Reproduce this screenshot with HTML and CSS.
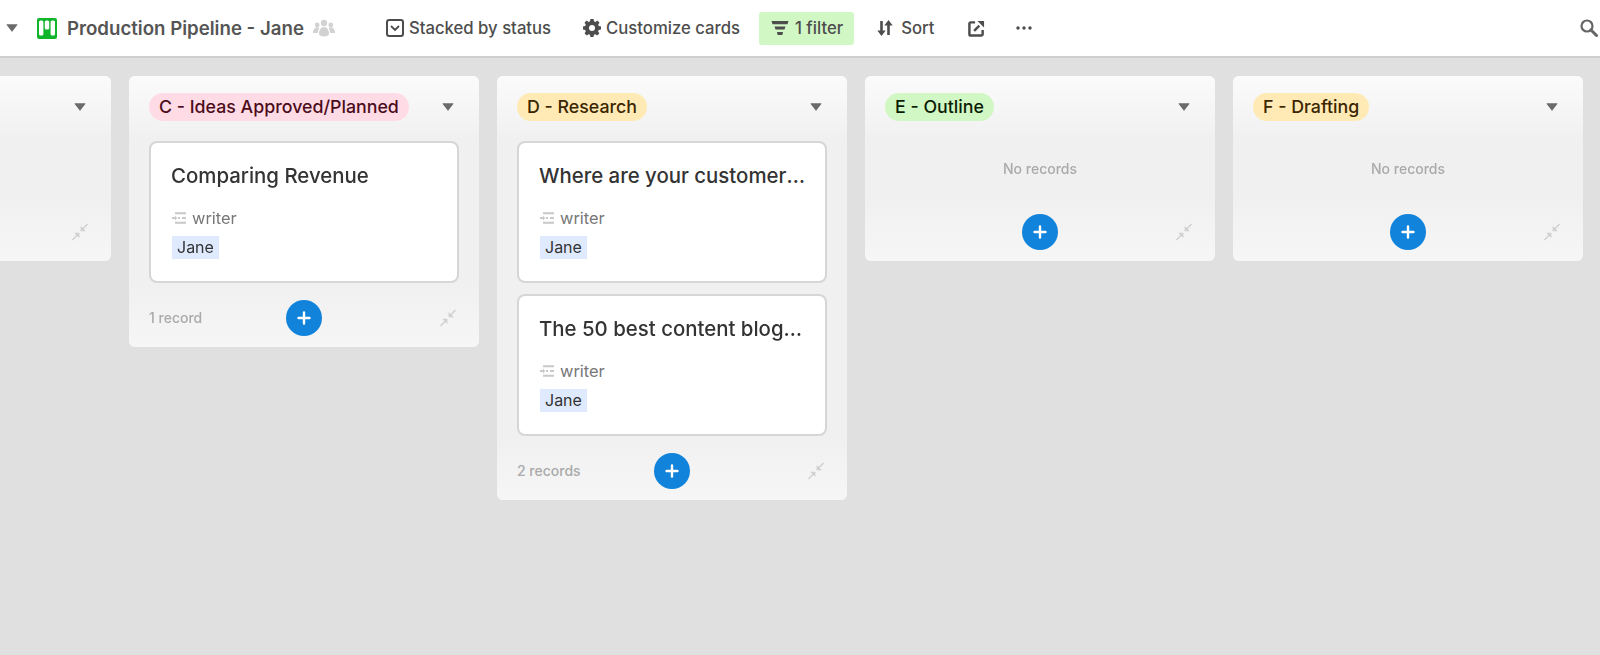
FILE: index.html
```html
<!DOCTYPE html>
<html lang="en">
<head>
<meta charset="utf-8">
<title>Production Pipeline - Jane</title>
<link rel="stylesheet" href="styles.css">
</head>
<body>
<svg class="defs" width="0" height="0" aria-hidden="true">
  <symbol id="caret" viewBox="0 0 12 10"><path d="M1 1.200h10a.4.4 0 0 1 .3.7L6.300 8.600a.4.4 0 0 1-.6 0L.7 1.900a.4.4 0 0 1 .3-.7z"/></symbol>
  <symbol id="plus" viewBox="0 0 14 14"><path d="M7 1.500v11M1.500 7h11" stroke="#fff" stroke-width="2.400" stroke-linecap="round" fill="none"/></symbol>
  <symbol id="collapse" viewBox="0 0 18 18"><path d="M17 1.500 12.600 6l2.200 2.200H9.600V3l2 2L16 .6zM1 16.500 5.400 12 3.200 9.800h5.200V15l-2-2L2 17.400z"/></symbol>
  <symbol id="field" viewBox="0 0 14 14"><path d="M3 1.200h11v2H3zM6 6h2v2H6zM10 6h4v2h-4zM3 10.800h11v2H3zM0 6h3V4.600L5.200 7 3 9.400V8H0z"/></symbol>
</svg>

<header class="toolbar">
  <svg class="tb-caret" viewBox="0 0 12 10"><use href="#caret"/></svg>
  <svg class="logo" viewBox="0 0 20 21"><rect width="20" height="21" rx="2" fill="#11b52b"/><rect x="2" y="2.500" width="4.400" height="15" rx="1.600" fill="#fff"/><rect x="7.800" y="2.500" width="4.400" height="9" rx="1.600" fill="#fff"/><rect x="13.600" y="2.500" width="4.400" height="15" rx="1.600" fill="#fff"/></svg>
  <h1 class="view-name">Production Pipeline - Jane</h1>
  <svg class="people" viewBox="0 0 22 18"><circle cx="4.200" cy="6" r="2.400"/><circle cx="17.800" cy="6" r="2.400"/><circle cx="11" cy="4" r="3.200"/><path d="M0 14c0-3.400 1.800-5.800 4.200-5.800 1 0 1.600.3 2.200.8C5.400 10.500 5 12.200 5 14zM22 14c0-3.400-1.800-5.800-4.200-5.800-1 0-1.600.3-2.200.8 1 1.500 1.400 3.200 1.400 5zM6 15c0-4.200 2-7 5-7s5 2.800 5 7c0 1.500-2.200 2.500-5 2.500S6 16.500 6 15z"/></svg>

  <div class="tool tool-stack">
    <svg class="ico" viewBox="0 0 18 18"><rect x="1" y="1" width="16" height="16" rx="2.200" fill="none" stroke="#4d4d4d" stroke-width="2"/><path d="M5.500 7.500 9 11l3.500-3.500" fill="none" stroke="#4d4d4d" stroke-width="1.800" stroke-linecap="round"/></svg>
    <span>Stacked by status</span>
  </div>
  <div class="tool tool-cust">
    <svg class="ico" viewBox="0 0 18 18"><path fill-rule="evenodd" d="M7.400 0h3.200l.4 2.300 1.400.6 1.900-1.300 2.200 2.200-1.300 1.900.6 1.400L18 7.500v3.100l-2.300.4-.6 1.400 1.300 1.900-2.200 2.200-1.900-1.300-1.400.6-.4 2.200H7.400L7 15.800l-1.400-.6-1.900 1.300-2.200-2.200 1.300-1.900-.6-1.400L0 10.600V7.500l2.200-.4.6-1.400-1.300-1.900 2.200-2.200 1.900 1.300L7 2.300zM9 6a3 3 0 1 0 0 6 3 3 0 0 0 0-6z" fill="#4d4d4d"/></svg>
    <span>Customize cards</span>
  </div>
  <div class="tool tool-filter">
    <svg class="ico" viewBox="0 0 18 16"><path d="M.5 1h17l-1 3.200H1.500zM3.500 6.500h11l-1 3H4.500zM6 12h6l-.6 3H6.600z" fill="#4d4d4d"/></svg>
    <span>1 filter</span>
  </div>
  <div class="tool tool-sort">
    <svg class="ico" viewBox="0 0 18 18"><path d="M4.200 2h2.600v9.500h2.900L5.500 17 1.300 11.500h2.900zM11.200 16V6.500H8.300L12.500 1l4.200 5.500h-2.900V16z" fill="#4d4d4d"/></svg>
    <span>Sort</span>
  </div>
  <svg class="tool-share" viewBox="0 0 18 18"><path d="M7.500 2.500H3A1.500 1.500 0 0 0 1.500 4v11A1.500 1.500 0 0 0 3 16.500h11a1.500 1.500 0 0 0 1.500-1.500v-4.500" fill="none" stroke="#4d4d4d" stroke-width="2.600"/><path d="M6.500 11.500 12 6" stroke="#4d4d4d" stroke-width="2.600" fill="none"/><path d="M10 1h7v7z" fill="#4d4d4d"/></svg>
  <svg class="tool-more" viewBox="0 0 16 4"><circle cx="2" cy="2" r="1.700"/><circle cx="8" cy="2" r="1.700"/><circle cx="14" cy="2" r="1.700"/></svg>
  <svg class="search" viewBox="0 0 18 18"><circle cx="7" cy="7" r="5.500" fill="none" stroke="#666" stroke-width="2.200"/><path d="M11 11l5.500 5.500" stroke="#666" stroke-width="3" stroke-linecap="round"/></svg>
</header>

<main class="board">
  <section class="stack">
    <div class="stack-head"><span></span><svg class="head-caret"><use href="#caret"/></svg></div>
    <div class="stack-empty"></div>
    <div class="stack-foot"><span class="count"></span><span class="foot-end"><svg class="collapse"><use href="#collapse"/></svg></span></div>
  </section>

  <section class="stack">
    <div class="stack-head"><span class="pill pill-pink">C - Ideas Approved/Planned</span><svg class="head-caret"><use href="#caret"/></svg></div>
    <div class="cards">
      <article class="card">
        <h2 class="card-title">Comparing Revenue</h2>
        <div class="field"><svg class="field-ico"><use href="#field"/></svg>writer</div>
        <span class="tag">Jane</span>
      </article>
    </div>
    <div class="stack-foot"><span class="count">1 record</span><button class="add"><svg><use href="#plus"/></svg></button><span class="foot-end"><svg class="collapse"><use href="#collapse"/></svg></span></div>
  </section>

  <section class="stack">
    <div class="stack-head"><span class="pill pill-amber">D - Research</span><svg class="head-caret"><use href="#caret"/></svg></div>
    <div class="cards">
      <article class="card">
        <h2 class="card-title">Where are your customers coming from?</h2>
        <div class="field"><svg class="field-ico"><use href="#field"/></svg>writer</div>
        <span class="tag">Jane</span>
      </article>
      <article class="card">
        <h2 class="card-title">The 50 best content blogs to follow</h2>
        <div class="field"><svg class="field-ico"><use href="#field"/></svg>writer</div>
        <span class="tag">Jane</span>
      </article>
    </div>
    <div class="stack-foot"><span class="count">2 records</span><button class="add"><svg><use href="#plus"/></svg></button><span class="foot-end"><svg class="collapse"><use href="#collapse"/></svg></span></div>
  </section>

  <section class="stack">
    <div class="stack-head"><span class="pill pill-green">E - Outline</span><svg class="head-caret"><use href="#caret"/></svg></div>
    <div class="stack-empty">No records</div>
    <div class="stack-foot"><span class="count"></span><button class="add"><svg><use href="#plus"/></svg></button><span class="foot-end"><svg class="collapse"><use href="#collapse"/></svg></span></div>
  </section>

  <section class="stack">
    <div class="stack-head"><span class="pill pill-amber">F - Drafting</span><svg class="head-caret"><use href="#caret"/></svg></div>
    <div class="stack-empty">No records</div>
    <div class="stack-foot"><span class="count"></span><button class="add"><svg><use href="#plus"/></svg></button><span class="foot-end"><svg class="collapse"><use href="#collapse"/></svg></span></div>
  </section>
</main>
</body>
</html>
```

FILE: styles.css
```css
* { box-sizing: border-box; }
html, body { height: 100%; }
body {
  margin: 0;
  overflow: hidden;
  background: #e0e0e0;
  color: #333;
  font-family: Inter, "Liberation Sans", sans-serif;
  display: flex;
  flex-direction: column;
  filter: blur(0.4px);
}
.defs { position: absolute; }

/* toolbar */
.toolbar {
  height: 58px;
  flex: none;
  display: flex;
  align-items: center;
  background: #fff;
  border-bottom: 2px solid #cfcfcf;
  color: #4d4d4d;
  padding-left: 6px;
}
.tb-caret { width: 12px; height: 10px; fill: #6b6b6b; }
.logo { width: 20px; height: 21px; margin-left: 19px; }
.view-name {
  margin: 0 0 0 10px;
  font-size: 18.650px;
  font-weight: 600;
  color: #555;
  white-space: nowrap;
}
.people { width: 22px; height: 18px; margin-left: 9px; fill: #d2d2d2; }
.tool {
  display: flex;
  align-items: center;
  font-size: 16.700px;
  font-weight: 500;
  white-space: nowrap;
}
.ico { width: 18px; height: 18px; flex: none; }
.tool-stack { margin-left: 51px; gap: 5px; }
.tool-cust { margin-left: 32px; gap: 5px; }
.tool-filter {
  margin-left: 19px;
  height: 33px;
  padding: 0 11px 0 12px;
  gap: 6px;
  background: #d1f7c4;
  border-radius: 3px;
}
.tool-filter .ico { height: 16px; }
.tool-sort { margin-left: 22px; gap: 7px; }
.tool-share { width: 17px; height: 17px; margin-left: 34px; }
.tool-more { width: 16px; height: 4px; margin-left: 31px; fill: #4d4d4d; }
.search { width: 18px; height: 18px; margin-left: auto; margin-right: 2px; }

/* board */
.board {
  flex: 1;
  display: flex;
  justify-content: flex-end;
  align-items: flex-start;
  gap: 18px;
  padding: 18px 17px 0 0;
  overflow: hidden;
}
.stack {
  flex: none;
  width: 350px;
  background: #f0f0f0;
  border-radius: 6px;
  overflow: hidden;
}
.stack-head {
  height: 65px;
  padding: 17px 20px 0;
  display: flex;
  justify-content: space-between;
  background: linear-gradient(#fbfbfb, #f0f0f0);
}
.pill {
  height: 28px;
  padding: 0 10px;
  border-radius: 14px;
  font-size: 17.800px;
  font-weight: 500;
  line-height: 28px;
  white-space: nowrap;
}
.pill-pink { background: #ffdce5; color: #4c0c1c; }
.pill-amber { background: #ffeab6; color: #3b2501; }
.pill-green { background: #d1f7c4; color: #0b1d05; }
.head-caret { width: 12px; height: 10px; margin: 9px 5px 0 0; fill: #6b6b6b; }

.cards {
  display: flex;
  flex-direction: column;
  gap: 11px;
  padding: 0 20px;
}
.card {
  height: 142px;
  padding: 19px 17px 0 21px;
  background: #fff;
  border: 2px solid #d6d6d6;
  border-radius: 8px;
}
.card-title {
  margin: 0 0 0 -1px;
  height: 28px;
  font-size: 20.400px;
  line-height: 28px;
  font-weight: 500;
  color: #333;
  white-space: nowrap;
  overflow: hidden;
  text-overflow: ellipsis;
}
.field {
  display: flex;
  align-items: center;
  gap: 6px;
  margin-top: 18px;
  height: 20px;
  font-size: 16.400px;
  color: #777;
}
.field-ico { width: 14px; height: 14px; fill: #c8c8c8; }
.tag {
  display: inline-block;
  margin-top: 8px;
  height: 23px;
  padding: 0 5px;
  background: #dfeaff;
  font-size: 16px;
  line-height: 23px;
  color: #333;
}
.stack-empty {
  height: 55px;
  display: flex;
  align-items: center;
  justify-content: center;
  font-size: 14px;
  font-weight: 500;
  color: #aaa;
}
.stack-foot {
  height: 64px;
  padding: 0 20px 11px;
  display: flex;
  align-items: flex-end;
  background: linear-gradient(#f0f0f0, #f6f6f6);
}
.stack-empty + .stack-foot { height: 65px; }
.count {
  flex: 1 1 0;
  height: 36px;
  line-height: 36px;
  font-size: 14px;
  font-weight: 500;
  color: #aaa;
}
.add {
  width: 36px;
  height: 36px;
  padding: 0;
  border: 0;
  border-radius: 50%;
  background: #1283da;
  display: flex;
  align-items: center;
  justify-content: center;
}
.add svg { width: 14px; height: 14px; }
.foot-end {
  flex: 1 1 0;
  height: 36px;
  display: flex;
  align-items: center;
  justify-content: flex-end;
}
.collapse { width: 18px; height: 18px; margin-right: 2px; fill: #d0d0d0; }
```
